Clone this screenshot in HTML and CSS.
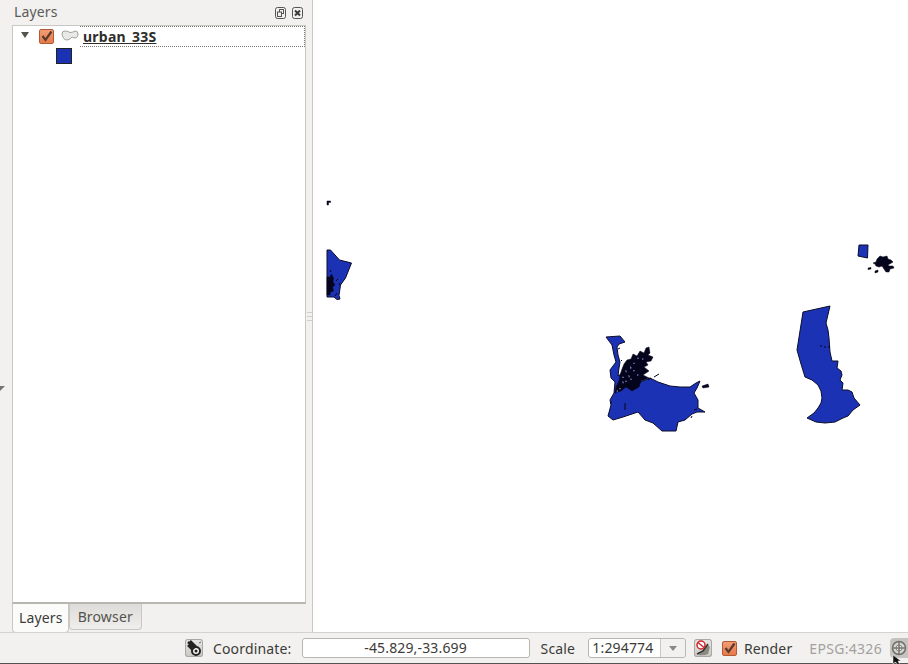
FILE: index.html
```html
<!DOCTYPE html>
<html lang="en">
<head>
    <meta charset="UTF-8">
    <title>QGIS</title>
    <link rel="stylesheet" href="styles.css">
</head>
<body>
    <div class="window">
        <div class="main">
            <div class="left-edge"><span class="edge-arrow"></span></div>
            <div class="dock">
                <div class="dock-title">
                    <span>Layers</span>
                    <div class="dock-buttons">
                        <svg width="11" height="12" viewBox="0 0 11 12"><rect x="0.5" y="0.5" width="10" height="11" rx="2" fill="none" stroke="#55534e"/><rect x="4.500" y="2.500" width="4" height="4" fill="none" stroke="#55534e"/><rect x="2.500" y="5" width="4" height="4.500" fill="#f2f1f0" stroke="#55534e"/></svg>
                        <svg width="11" height="12" viewBox="0 0 11 12"><rect x="0.5" y="0.5" width="10" height="11" rx="2" fill="none" stroke="#55534e"/><path d="M3 3.500l5 5M8 3.500l-5 5" stroke="#3c3b37" stroke-width="2"/></svg>
                    </div>
                </div>
                <div class="layer-tree">
                    <div class="layer-row">
                        <span class="tree-arrow"></span>
                        <span class="check small-gap"><svg width="13" height="13" viewBox="0 0 13 13"><path d="M2.500 6l3 4L11.500 1.500" fill="none" stroke="#5a3a2a" stroke-width="2.200"/></svg></span>
                        <svg class="layer-icon" width="18" height="12" viewBox="0 0 18 12"><path d="M1 4q0-3 3-3 3 0 5 1.500 3 0 5-1.500 3 0 3 3 0 3-2 4-2 0-4-1-2 3-5 3Q2 10 1 4z" fill="#e9e9e6" stroke="#a0a09b"/></svg>
                        <span class="layer-name">urban_33S</span>
                    </div>
                    <div class="legend-row"><span class="swatch"></span></div>
                </div>
                <div class="tabs">
                    <span class="tab active">Layers</span>
                    <span class="tab">Browser</span>
                </div>
            </div>
            <div class="splitter"><span class="grip"></span></div>
            <div class="map">
                <svg class="map-svg" width="595" height="632" viewBox="313 0 595 632">
                    <!-- top left speck and strip -->
                    <path class="dark" d="M327 201h3.500v1.500h-2v2.500h-1.500z"/>
                    <path class="fill" d="M327 250h3.500l9 10 12 3-6 15-5 7-1.500 10.500 1 3.500-3 .5-3-2.500h-7z"/>
                    <path class="dark" d="M327 277h3l1.500-3 2 4-.5 4 2 3-2.500 2 1 4-3 1-.5 3h-3z"/>
                    <path class="thin" d="M336 281l2-2M339 285l1-2M330 270l1 2M335 296l2-3"/>

                    <!-- middle shape -->
                    <path class="fill" d="M606 337L620 336 625 342 619 344 617 347 618 355 620 362 619 368 618 376 624 372 632 380 640 382 650 378 658 382 670 386 680 387 690 387 696 383 700 381 697 388 694 393 698 400 698 408 705 412 697 412 692 414 685 420 678 422 676 431 662 431 653 423 645 420 638 412 623 417 613 420 608 416 611 405 610 400 614 393 615 382 611 378 610 370 616 362 614 355 612 345z"/>
                    <path class="dark" d="M615 393L616 387 619 381 620 375 622 369 624 364 627 360 631 359 633 354 637 356 640 351 644 353 646 348 649 347 650 353 648 355 653 357 651 361 646 362 648 365 644 367 649 371 643 375 649 378 641 381 639 387 632 391 626 387 621 391 617 392z"/>
                    <path class="dark" d="M702 386l6-2 1 3-6 1z"/>
                    <path class="speck" d="M625 370l2 1-1 2zM630 366l2 2-2 1zM622 381l2 1-1 2zM634 362l1 2-2 0zM628 375l2 1-1 2zM619 388l2 0-1 2zM638 357l1 2-2 0zM642 358l2 1-2 1zM633 370l2 0-1 2zM626 380l1 2-2 0zM637 374l2 1-2 1zM623 376l1 2-2 0zM631 378l1 2-2 0zM616 391l2-1 0 2z"/>
                    <path class="thin" d="M618 349l2-1M654 377l5-3M648 380l3-2M694 410l3-1M610 403l2-1M691 418l1-2M625 403l0 7M621 360l1 1"/>

                    <!-- right shapes -->
                    <path class="fill" d="M859 245l9 0-.5 13-9.500-2z"/>
                    <path class="dark" d="M873 263l3-1 1-3 3-3 3 1 4-1 1 3 3 1 2 2-5 3 1 1 4 0 1 2-4 1-1 3-3 0-2-3-2-3-3 1-3-1-1-2z"/>
                    <path class="dark" d="M868 268l3-.5 0 1.500-3 .5zM875 271l3-1 0 2-3 1z"/>
                    <path class="fill" d="M803 312L830 306 826 323 828 330 829 338 830 352 832 361 838 361 837 368 841 371 842 375 840 380 843 383 842 390 848 390 852 392 854 398 860 405 853 410 848 416 843 418 835 422 825 423 816 422 807 418 814 413 818 408 821 403 822 398 821 391 818 385 812 380 805 377 801 364 797 350z"/>
                    <path class="thin" d="M820 346h2M824 347h2M828 347h2"/>
                </svg>
            </div>
        </div>
        <div class="statusbar">
            <span class="tool-btn">
                <svg width="18" height="18" viewBox="0 0 18 18"><circle cx="11" cy="12" r="4" fill="#f4f4f2" stroke="#222" stroke-width="2"/><circle cx="11" cy="12" r="1.500" fill="#222"/><path d="M3 3l7 6M5 2l6 6M3 6l5 5" stroke="#222" stroke-width="2.500"/><path d="M14 4l2-1" stroke="#666"/></svg>
            </span>
            <span class="label coord-label">Coordinate:</span>
            <span class="coord-box">-45.829,-33.699</span>
            <span class="label scale-label">Scale</span>
            <span class="scale-box"><span class="scale-value">1:294774</span><span class="scale-drop"><span class="drop-arrow"></span></span></span>
            <span class="tool-btn stop-btn">
                <svg width="18" height="18" viewBox="0 0 18 18"><path d="M4 16l10-10 2 2-2 7q-4 2-10 1z" fill="#8a8a80"/><path d="M3 15l6-3 5-7" fill="none" stroke="#333" stroke-width="1.500"/><circle cx="7" cy="6" r="4" fill="#fff" stroke="#d2232a" stroke-width="1.500"/><path d="M4 3.500l6 5" stroke="#d2232a" stroke-width="1.500"/></svg>
            </span>
            <span class="check render-check"><svg width="13" height="13" viewBox="0 0 13 13"><path d="M2.500 6l3 4L11.500 1.500" fill="none" stroke="#5a3a2a" stroke-width="2.200"/></svg></span>
            <span class="label render-label">Render</span>
            <span class="label epsg">EPSG:4326</span>
            <span class="globe">
                <svg width="16" height="16" viewBox="0 0 16 16"><circle cx="8" cy="8" r="6.500" fill="#d6d6d2" stroke="#6f6f6b" stroke-width="1.500"/><circle cx="8" cy="8" r="3" fill="#e8e8e5" stroke="#8b8b87"/><path d="M8 1v14M1 8h14" stroke="#77776f" stroke-width="1.500"/></svg>
            </span>
            <svg class="cursor" width="12" height="10" viewBox="0 0 12 10"><path d="M1 0v9l2.500-2L6 10h2L6 6h3z" fill="#111" stroke="#fff" stroke-width="0.500"/></svg>
        </div>
    </div>
</body>
</html>
```

FILE: styles.css
```css
html, body {
    margin: 0;
    padding: 0;
}
body {
    font-family: "Noto Sans", sans-serif;
    font-size: 14px;
    letter-spacing: 0.15px;
    color: #3c3b37;
    background: #f2f1f0;
    overflow: hidden;
}
.window {
    width: 908px;
    height: 664px;
    display: flex;
    flex-direction: column;
}
.main {
    display: flex;
    height: 632px;
}
.left-edge {
    width: 12px;
    display: flex;
    align-items: center;
    padding-top: 145px;
    box-sizing: border-box;
}
.edge-arrow {
    width: 0;
    height: 0;
    border-top: 5px solid #77756f;
    border-right: 5px solid transparent;
}
.dock {
    width: 294px;
    display: flex;
    flex-direction: column;
}
.dock-title {
    height: 25px;
    display: flex;
    justify-content: space-between;
    align-items: center;
    padding: 0 2px 2px 2px;
    box-sizing: border-box;
    color: #5c5b56;
}
.dock-buttons {
    display: flex;
    gap: 6px;
    margin-top: 2px;
    margin-right: 1px;
}
.dock-buttons svg {
    display: block;
}
.layer-tree {
    flex: 1;
    background: #fff;
    border: 1px solid #c9c7c2;
    border-bottom: 2px solid #b8b6b1;
    box-sizing: border-box;
}
.layer-row {
    height: 21px;
    display: flex;
    align-items: center;
}
.tree-arrow {
    width: 0;
    height: 0;
    margin-left: 8px;
    border-left: 4px solid transparent;
    border-right: 4px solid transparent;
    border-top: 6px solid #55534e;
    margin-top: -3px;
}
.check {
    width: 13px;
    height: 13px;
    display: inline-block;
    background: linear-gradient(#f29c76, #e57a4a);
    border: 1px solid #b35a33;
    border-radius: 2px;
}
.check svg {
    display: block;
}
.small-gap {
    margin-left: 10px;
    margin-top: -1px;
}
.layer-icon {
    margin-left: 7px;
    margin-top: -2px;
}
.layer-name {
    flex: 1;
    margin-left: 1px;
    height: 21px;
    line-height: 20px;
    padding-left: 3px;
    font-weight: bold;
    letter-spacing: 0.25px;
    color: #2e2d2a;
    border: 1px dotted #77756f;
    border-left: none;
    box-sizing: border-box;
    text-decoration: underline;
}
.legend-row {
    height: 19px;
    padding-left: 43px;
    padding-top: 1px;
}
.swatch {
    display: block;
    width: 14px;
    height: 14px;
    background: #1c32b4;
    border: 1px solid #222;
}
.tabs {
    height: 28px;
    display: flex;
    align-items: flex-start;
}
.tab {
    height: 25px;
    line-height: 25px;
    padding: 0 8px;
    color: #55534e;
    background: linear-gradient(#dedcd9, #efeeec);
    border: 1px solid #c9c7c2;
    border-top: none;
    border-radius: 0 0 4px 4px;
}
.tab.active {
    height: 28px;
    line-height: 27px;
    padding: 0 5px 0 6px;
    background: #fbfbfa;
    color: #3c3b37;
}
.splitter {
    width: 6px;
    display: flex;
    align-items: center;
    justify-content: center;
    border-right: 1px solid #c9c7c2;
}
.grip {
    width: 5px;
    height: 7px;
    border-top: 1px solid #d0cec9;
    border-bottom: 1px solid #d0cec9;
    background: linear-gradient(#d0cec9, #d0cec9) center / 100% 1px no-repeat;
}
.map {
    flex: 1;
    background: #fff;
}
.map-svg {
    display: block;
}
.fill {
    fill: #1c32b4;
    stroke: #0a0d2a;
    stroke-width: 1;
}
.dark {
    fill: #04051c;
    stroke: #04051c;
    stroke-width: 0.5;
}
.speck {
    fill: #6f76b8;
}
.thin {
    fill: none;
    stroke: #04051c;
    stroke-width: 1;
}
.statusbar {
    position: relative;
    height: 32px;
    display: flex;
    align-items: center;
    padding-left: 185px;
    border-top: 1px solid #d4d2cd;
    border-bottom: 1px solid #55534e;
    box-sizing: border-box;
}
.tool-btn {
    width: 18px;
    height: 18px;
    display: block;
    background: linear-gradient(#e8e7e4, #c9c7c2);
    box-shadow: inset 0 0 0 1px #aaa8a3;
    border-radius: 3px;
}
.tool-btn svg {
    display: block;
}
.label {
    white-space: nowrap;
}
.coord-label {
    margin-left: 10px;
    width: 89px;
}
.coord-box {
    width: 227px;
    height: 18px;
    line-height: 18px;
    text-align: center;
    background: #fff;
    border: 1px solid #b8b6b1;
    border-radius: 3px;
}
.scale-label {
    margin-left: 11px;
    width: 48px;
}
.scale-box {
    width: 96px;
    height: 18px;
    display: flex;
    background: #fff;
    border: 1px solid #b8b6b1;
    border-radius: 3px;
}
.scale-value {
    flex: 1;
    padding-left: 3px;
    line-height: 18px;
}
.scale-drop {
    width: 24px;
    display: flex;
    align-items: center;
    justify-content: center;
    background: #f2f1f0;
    border-left: 1px solid #c9c7c2;
    border-radius: 0 3px 3px 0;
}
.drop-arrow {
    width: 0;
    height: 0;
    border-left: 4px solid transparent;
    border-right: 4px solid transparent;
    border-top: 5px solid #8a8883;
}
.stop-btn {
    margin-left: 8px;
}
.render-check {
    margin-left: 10px;
}
.render-label {
    margin-left: 7px;
}
.epsg {
    margin-left: 17px;
    letter-spacing: 0.3px;
    color: #a3a19c;
}
.globe {
    margin-left: 8px;
    padding: 2px 1px;
    display: block;
    background: #c4c3bf;
    border-radius: 4px 0 0 4px;
}
.globe svg {
    display: block;
}
.cursor {
    position: absolute;
    left: 892px;
    top: 22px;
}
```
